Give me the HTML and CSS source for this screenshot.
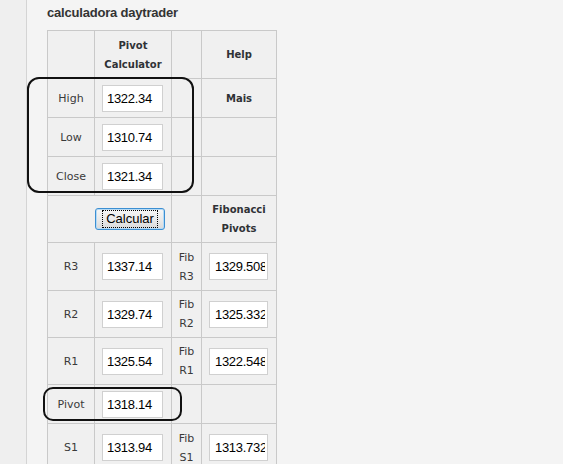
FILE: index.html
```html
<!DOCTYPE html>
<html lang="pt">
<head>
<meta charset="utf-8">
<title>calculadora daytrader</title>
<link rel="stylesheet" href="styles.css">
</head>
<body>
<div class="page">
  <aside class="rail"></aside>
  <main class="content">
    <h1 class="title">calculadora daytrader</h1>
    <div class="calc">
      <div class="cell"></div>
      <div class="cell head">Pivot<br>Calculator</div>
      <div class="cell"></div>
      <div class="cell head">Help</div>

      <div class="cell label">High</div>
      <div class="cell field"><input class="num" type="text" value="1322.34"></div>
      <div class="cell"></div>
      <div class="cell head">Mais</div>

      <div class="cell label">Low</div>
      <div class="cell field"><input class="num" type="text" value="1310.74"></div>
      <div class="cell"></div>
      <div class="cell"></div>

      <div class="cell label">Close</div>
      <div class="cell field"><input class="num" type="text" value="1321.34"></div>
      <div class="cell"></div>
      <div class="cell"></div>

      <div class="cell action"><button class="btn" type="button"><span class="btn-focus">Calcular</span></button></div>
      <div class="cell"></div>
      <div class="cell head">Fibonacci<br>Pivots</div>

      <div class="cell label">R3</div>
      <div class="cell field"><input class="num" type="text" value="1337.14"></div>
      <div class="cell label">Fib<br>R3</div>
      <div class="cell field"><input class="num fib" type="text" value="1329.508"></div>

      <div class="cell label">R2</div>
      <div class="cell field"><input class="num" type="text" value="1329.74"></div>
      <div class="cell label">Fib<br>R2</div>
      <div class="cell field"><input class="num fib" type="text" value="1325.332"></div>

      <div class="cell label">R1</div>
      <div class="cell field"><input class="num" type="text" value="1325.54"></div>
      <div class="cell label">Fib<br>R1</div>
      <div class="cell field"><input class="num fib" type="text" value="1322.548"></div>

      <div class="cell label">Pivot</div>
      <div class="cell field"><input class="num" type="text" value="1318.14"></div>
      <div class="cell"></div>
      <div class="cell"></div>

      <div class="cell label">S1</div>
      <div class="cell field"><input class="num" type="text" value="1313.94"></div>
      <div class="cell label">Fib<br>S1</div>
      <div class="cell field"><input class="num fib" type="text" value="1313.732"></div>

      <div class="cell label">S2</div>
      <div class="cell field"><input class="num" type="text" value="1306.54"></div>
      <div class="cell label">Fib<br>S2</div>
      <div class="cell field"><input class="num fib" type="text" value="1310.971"></div>

      <div class="cell label">S3</div>
      <div class="cell field"><input class="num" type="text" value="1302.34"></div>
      <div class="cell label">Fib<br>S3</div>
      <div class="cell field"><input class="num fib" type="text" value="1306.54"></div>
    </div>
  </main>
  <div class="mark mark-hlc"></div>
  <div class="mark mark-pivot"></div>
</div>
</body>
</html>
```

FILE: styles.css
```css
html, body {
  margin: 0;
  padding: 0;
}

body {
  background: #f4f4f4;
}

.page {
  position: relative;
  display: flex;
  height: 100vh;
  overflow: hidden;
}

.rail {
  width: 26px;
  flex: 0 0 26px;
  background: #efefef;
  border-right: 1px solid #d4d4d4;
}

.content {
  flex: 1;
  background: #f4f4f4;
  padding: 5px 0 0 20px;
}

.title {
  margin: 0 0 10px;
  font-family: "Liberation Sans", Arial, sans-serif;
  font-weight: bold;
  font-size: 13px;
  line-height: 15px;
  letter-spacing: -0.2px;
  color: #333;
}

.calc {
  display: grid;
  grid-template-columns: 46px 76px 29px 74px;
  grid-template-rows: 47px 38px 38px 38px 46px 47px 46px 46px 38px 47px 46px 46px;
  gap: 1px;
  padding: 1px;
  width: max-content;
  background: #c9c9c9;
}

.cell {
  background: #f0f0f0;
  display: flex;
  align-items: center;
  justify-content: center;
  text-align: center;
  font-family: "DejaVu Sans", Verdana, sans-serif;
  font-size: 11px;
  line-height: 19px;
  color: #3a3a3a;
}

.head {
  font-weight: bold;
  font-size: 10px;
  color: #2f3236;
}

.field {
  justify-content: flex-start;
  padding-left: 7px;
}

.action {
  grid-column: span 2;
  justify-content: flex-end;
  padding-right: 6px;
}

.num {
  box-sizing: border-box;
  width: 61px;
  height: 27px;
  margin: 0;
  padding: 0 2px 0 4px;
  border: 1px solid #d0d0d0;
  background: #fff;
  font-family: "Liberation Sans", Arial, sans-serif;
  font-size: 13px;
  letter-spacing: -0.3px;
  color: #000;
  outline: none;
}

.num.fib {
  width: 59px;
  padding: 0 2px 0 5px;
}

.btn {
  box-sizing: border-box;
  width: 70px;
  height: 22px;
  margin: 0;
  padding: 0;
  border: 1px solid #3c8fd2;
  border-radius: 3px;
  background: linear-gradient(#f7f7f7, #e9e9e9 55%, #d9d9d9);
  box-shadow: inset 0 0 0 1px #b5daf5;
  font-family: "Liberation Sans", Arial, sans-serif;
  font-size: 13px;
  color: #000;
  display: flex;
  align-items: center;
  justify-content: center;
}

.btn-focus {
  display: inline-block;
  padding: 0 3px;
  line-height: 16px;
  border: 1px dotted #000;
}

.mark {
  position: absolute;
  box-sizing: border-box;
  border: 2px solid #111;
  pointer-events: none;
}

.mark-hlc {
  left: 27px;
  top: 77px;
  width: 167px;
  height: 116px;
  border-radius: 12px;
}

.mark-pivot {
  left: 43px;
  top: 387px;
  width: 139px;
  height: 34px;
  border-radius: 10px;
}
```
